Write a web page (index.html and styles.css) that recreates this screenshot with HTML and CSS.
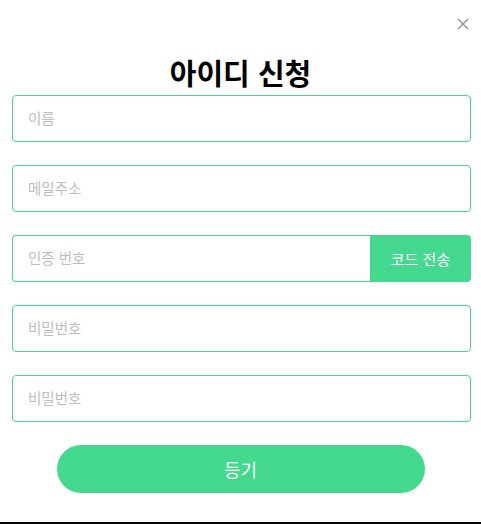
FILE: index.html
```html
<!DOCTYPE html>
<html lang="ko">
<head>
<meta charset="utf-8">
<link rel="stylesheet" href="styles.css">
</head>
<body>
<div class="dialog">
  <button class="close" aria-label="닫기">
    <svg width="12" height="12" viewBox="0 0 12 12"><path d="M1 1L11 11M11 1L1 11" stroke="#8a8a8a" stroke-width="1.2" fill="none"/></svg>
  </button>
  <h1 class="title">아이디 신청</h1>
  <form class="form">
    <div class="field"><input class="input" placeholder="이름"></div>
    <div class="field"><input class="input" placeholder="메일주소"></div>
    <div class="field field-group">
      <input class="input input-join" placeholder="인증 번호">
      <button type="button" class="send">코드 전송</button>
    </div>
    <div class="field"><input class="input" type="password" placeholder="비밀번호"></div>
    <div class="field"><input class="input" type="password" placeholder="비밀번호"></div>
    <button type="button" class="submit">등기</button>
  </form>
</div>
</body>
</html>
```
FILE: styles.css
```css
html, body {
  margin: 0;
  padding: 0;
  background: #fff;
}
body {
  font-family: "Noto Sans CJK KR", "Noto Sans", sans-serif;
}
.dialog {
  position: relative;
  height: 524px;
  box-sizing: border-box;
  border-bottom: 2px solid #000;
  padding: 54px 10px 0 12px;
}
.close {
  position: absolute;
  top: 18px;
  right: 12px;
  width: 12px;
  height: 12px;
  padding: 0;
  border: 0;
  background: none;
  display: flex;
}
.title {
  margin: 0 0 5px;
  text-align: center;
  font-size: 29px;
  line-height: 36px;
  font-weight: 700;
  color: #000;
  padding-right: 2px;
}
.form {
  display: flex;
  flex-direction: column;
  gap: 23px;
}
.field {
  display: flex;
  height: 47px;
}
.input {
  flex: 1;
  min-width: 0;
  height: 47px;
  box-sizing: border-box;
  border: 1px solid #44d98e;
  border-radius: 4px;
  padding: 0 15px 2px;
  font-family: inherit;
  font-size: 14.5px;
  color: #333;
  outline: none;
}
.input::placeholder {
  color: #bdbdbd;
}
.input-join {
  border-radius: 4px 0 0 4px;
  border-right: 0;
}
.send {
  width: 101px;
  height: 47px;
  border: 0;
  border-radius: 0 4px 4px 0;
  background: #44d98e;
  color: #fff;
  font-family: inherit;
  font-size: 15px;
  padding: 0;
}
.submit {
  align-self: center;
  margin: 0 2px 0 0;
  width: 368px;
  height: 48px;
  border: 0;
  border-radius: 24px;
  background: #44d98e;
  color: #fff;
  font-family: inherit;
  font-size: 18px;
  padding: 0;
}
```
